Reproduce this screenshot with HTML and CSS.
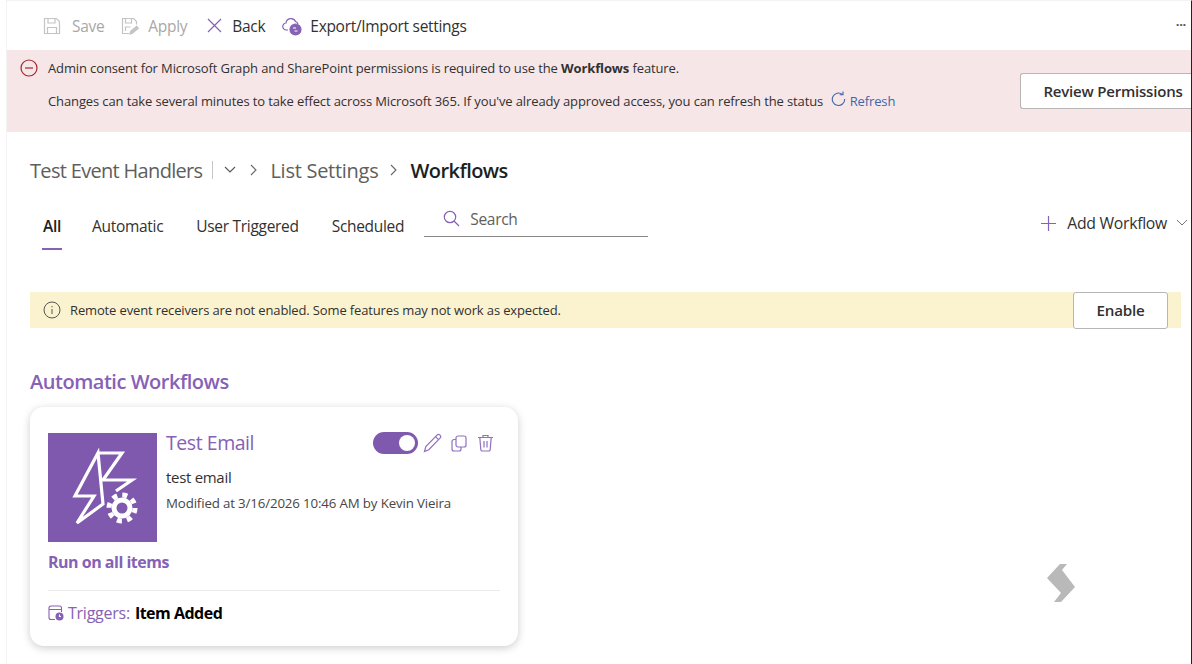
FILE: index.html
```html
<!DOCTYPE html>
<html lang="en">
  <head>
    <meta charset="UTF-8" />
    <title>Workflows</title>
    <link rel="stylesheet" href="styles.css">
  </head>
  <body>
    <div class="page">
      <!-- toolbar -->
      <div class="toolbar">
        <div class="cmd disabled cmd-save">
          <svg width="18" height="18" viewBox="0 0 18 18" fill="none" stroke="#c4c4c4" stroke-width="1.2"><path d="M1.500 1.500h12l3 3v12h-15z"/><path d="M5 1.500v4.500h7V1.500"/><path d="M4.500 16.500v-6h9v6"/></svg>
          <span>Save</span>
        </div>
        <div class="cmd disabled cmd-apply">
          <svg width="18" height="18" viewBox="0 0 18 18" fill="none" stroke="#c4c4c4" stroke-width="1.2"><path d="M8 16.500H1.500v-15h11l3 3v3"/><path d="M4.500 1.500v4.500h6V1.500"/><path d="M4.500 14v-4h5"/><path d="M9 17l.6-2.600 6-5 1.700 1.800-6 5z" fill="#c4c4c4"/></svg>
          <span>Apply</span>
        </div>
        <div class="cmd cmd-back">
          <svg width="15" height="15" viewBox="0 0 15 15" fill="none" stroke="#8661b5" stroke-width="1.200"><path d="M1 1l13 13M14 1L1 14"/></svg>
          <span>Back</span>
        </div>
        <div class="cmd cmd-export">
          <svg width="20" height="20" viewBox="0 0 20 20" fill="none" stroke="#8661b5" stroke-width="1.200"><path d="M6 14H4.500a3.500 3.500 0 0 1-.5-7A5 5 0 0 1 13.500 5.500a3.500 3.500 0 0 1 2.500 2.500"/><circle cx="13.500" cy="13.500" r="5.500" fill="#8661b5"/><path d="M11 12h3M12.500 15h3" stroke="#fff"/></svg>
          <span>Export/Import settings</span>
        </div>
        <div class="more">···</div>
      </div>

      <!-- consent banner -->
      <div class="banner">
        <svg class="banner-icon" width="18" height="18" viewBox="0 0 18 18" fill="none" stroke="#a4262c" stroke-width="1.200"><circle cx="9" cy="9" r="8"/><path d="M5 9h8"/></svg>
        <div class="banner-text">
          <p>Admin consent for Microsoft Graph and SharePoint permissions is required to use the <b>Workflows</b> feature.</p>
          <p class="second">
            Changes can take several minutes to take effect across Microsoft 365. If you've already approved access, you can refresh the status
            <svg class="refresh-icon" width="15" height="16" viewBox="0 0 15 16" fill="none" stroke="#3f66a8" stroke-width="1.100"><path d="M11.500 3.500A6.200 6.200 0 1 0 13.700 8"/><path d="M12 .5v3.300H8.700"/></svg>
            <span class="refresh">Refresh</span>
          </p>
        </div>
        <button type="button" class="btn review-btn">Review Permissions</button>
      </div>

      <div class="content">
        <!-- breadcrumb -->
        <div class="crumbs">
          <span class="crumb-root">Test Event Handlers</span>
          <span class="crumb-bar"></span>
          <svg width="12" height="8" viewBox="0 0 12 8" fill="none" stroke="#555" stroke-width="1.100"><path d="M1 1l5 5 5-5"/></svg>
          <svg class="crumb-sep first" width="8" height="12" viewBox="0 0 8 12" fill="none" stroke="#666" stroke-width="1.100"><path d="M1 1l5 5-5 5"/></svg>
          <span class="crumb-list">List Settings</span>
          <svg class="crumb-sep" width="8" height="12" viewBox="0 0 8 12" fill="none" stroke="#666" stroke-width="1.100"><path d="M1 1l5 5-5 5"/></svg>
          <span class="crumb-current">Workflows</span>
        </div>

        <!-- tabs -->
        <div class="tabbar">
          <div class="tab active">All</div>
          <div class="tab">Automatic</div>
          <div class="tab">User Triggered</div>
          <div class="tab">Scheduled</div>
          <div class="search">
            <svg width="17" height="17" viewBox="0 0 17 17" fill="none" stroke="#8661b5" stroke-width="1.200"><circle cx="7" cy="7" r="5.700"/><path d="M11 11l5 5"/></svg>
            <span>Search</span>
          </div>
          <div class="add">
            <svg width="15" height="15" viewBox="0 0 15 15" fill="none" stroke="#8661b5" stroke-width="1.200"><path d="M7.500 0v15M0 7.500h15"/></svg>
            <span>Add Workflow</span>
            <svg class="add-caret" width="12" height="8" viewBox="0 0 12 8" fill="none" stroke="#777" stroke-width="1"><path d="M1 1l5 5 5-5"/></svg>
          </div>
        </div>

        <!-- warning -->
        <div class="notice">
          <svg width="18" height="18" viewBox="0 0 18 18" fill="none" stroke="#555" stroke-width="1"><circle cx="9" cy="9" r="8"/><path d="M9 8v5M9 5v1.300"/></svg>
          <span class="notice-text">Remote event receivers are not enabled. Some features may not work as expected.</span>
          <button type="button" class="btn enable-btn">Enable</button>
        </div>

        <h2 class="section-title">Automatic Workflows</h2>

        <!-- workflow card -->
        <div class="card">
          <div class="card-top">
            <div class="thumb">
              <svg width="109" height="109" viewBox="0 0 109 109" fill="none" stroke="#fff" stroke-width="3.200">
                <path d="M50 20H74L55 47H84L68 58M55 71L29 90L46 63H27L50 20Z"/>
                <circle cx="74" cy="75" r="8" stroke-width="5"/>
                <circle cx="74" cy="75" r="13" stroke-width="5" stroke-dasharray="5 5.200"/>
              </svg>
            </div>
            <div class="card-info">
              <div class="card-head">
                <span class="card-title">Test Email</span>
                <div class="card-actions">
                  <div class="toggle"><span class="knob"></span></div>
                  <svg class="edit-icon" width="19" height="20" viewBox="0 0 19 20" fill="none" stroke="#9070c0" stroke-width="1.200"><path d="M1.500 18.500l1.300-5L14 2.200a2 2 0 0 1 3 3L5.800 16.700z"/><path d="M12.500 3.700l3 3"/></svg>
                  <svg width="16" height="17" viewBox="0 0 16 17" fill="none" stroke="#9070c0" stroke-width="1.200"><rect x="5" y="1" width="10" height="11" rx="2"/><path d="M5 4.500H3a2 2 0 0 0-2 2V14a2 2 0 0 0 2 2h5a2 2 0 0 0 2-2v-2"/></svg>
                  <svg class="trash-icon" width="17" height="18" viewBox="0 0 17 18" fill="none" stroke="#9070c0" stroke-width="1.200"><path d="M1 3.500h15M6 3.500V1.500h5v2M2.800 3.500l1 12a1.500 1.500 0 0 0 1.500 1.500h6.400a1.500 1.500 0 0 0 1.500-1.500l1-12M7 7v6.500M10 7v6.500"/></svg>
                </div>
              </div>
              <div class="card-desc">test email</div>
              <div class="card-meta">Modified at 3/16/2026 10:46 AM by Kevin Vieira</div>
            </div>
          </div>
          <div class="card-scope">Run on all items</div>
          <div class="card-triggers">
            <svg width="16" height="17" viewBox="0 0 16 17" fill="none" stroke="#8661b5" stroke-width="1.100"><path d="M7 14.500H3a2 2 0 0 1-2-2V3a2 2 0 0 1 2-2h8.500a2 2 0 0 1 2 2v4M1 4.500h12.500"/><circle cx="11.500" cy="11.500" r="4" fill="#8661b5" stroke="none"/><path d="M11.500 9.500v2h1.500" stroke="#fff"/></svg>
            <span class="trigger-label">Triggers:</span>
            <b>Item Added</b>
          </div>
        </div>
      </div>

      <svg class="watermark" width="30" height="40" viewBox="0 0 30 40"><path d="M13 0h7L15 6 28 23 14 38H7L14 29 0 14z" fill="#b9b9b9"/></svg>
    </div>
  </body>
</html>
```

FILE: styles.css
```css
* {
  margin: 0;
  padding: 0;
  box-sizing: border-box;
}
html,
body {
  height: 664px;
  overflow: hidden;
  background-color: #fff;
}
body {
  font-family: "Open Sans", "Liberation Sans", sans-serif;
  color: #323130;
}
.page {
  position: relative;
  height: 664px;
  margin-left: 6px;
  border-right: 1px solid #222;
  border-left: 1px solid #f3f3f3;
  border-top: 1px solid #f3f3f3;
}
svg {
  flex-shrink: 0;
}

/* toolbar */
.toolbar {
  height: 49px;
  display: flex;
  align-items: center;
  padding-left: 36px;
  font-size: 15.5px;
  letter-spacing: -0.3px;
}
.cmd {
  display: flex;
  align-items: center;
  gap: 11px;
  margin-right: 19px;
}
.disabled {
  color: #a8a8a8;
}
.cmd-save {
  margin-right: 17px;
}
.cmd-apply {
  gap: 9px;
  margin-right: 20px;
}
.cmd-back {
  gap: 10px;
  margin-right: 17px;
}
.cmd-export {
  gap: 8px;
}
.more {
  margin: -3px 5px 0 auto;
  font-size: 13px;
  font-weight: 700;
  color: #555;
}

/* banner */
.banner {
  height: 82px;
  background-color: #f6e6e7;
  display: flex;
  align-items: flex-start;
  padding: 9px 0 0 13px;
  font-size: 13px;
  letter-spacing: -0.12px;
}
.banner-icon {
  margin-right: 10px;
}
.banner-text {
  flex: 1;
  line-height: 18px;
}
.second {
  margin-top: 14px;
}
.refresh-icon {
  vertical-align: -1px;
  margin-left: 5px;
}
.refresh {
  color: #3f66a8;
}
.btn {
  background-color: #fff;
  border: 1px solid #b8b6b4;
  border-radius: 3px;
  font-family: inherit;
  font-weight: 600;
  color: #323130;
}
.review-btn {
  width: 171px;
  height: 36px;
  margin-top: 14px;
  border-right: none;
  border-radius: 3px 0 0 3px;
  font-size: 15px;
  letter-spacing: -0.2px;
  padding-left: 14px;
}

/* main area */
.content {
  padding: 0 10px 0 23px;
}
.crumbs {
  display: flex;
  align-items: center;
  height: 36px;
  margin-top: 20px;
  font-size: 20px;
  letter-spacing: -0.35px;
  color: #605e5c;
}
.crumb-root {
  letter-spacing: -0.68px;
}
.crumb-bar {
  width: 1px;
  height: 18px;
  background-color: #c8c6c4;
  margin: 0 11px 0 10px;
}
.crumb-sep {
  margin: 0 12px;
}
.crumb-sep.first {
  margin-left: 14px;
}
.crumb-list {
  letter-spacing: -0.27px;
}
.crumb-current {
  font-weight: 600;
  letter-spacing: -0.55px;
  color: #201f1e;
}
.tabbar {
  display: flex;
  align-items: flex-start;
  height: 91px;
  margin-top: 15px;
  font-size: 15.5px;
  letter-spacing: -0.3px;
}
.tab {
  position: relative;
  margin: 12px 33px 0 0;
  height: 32px;
}
.tab.active {
  font-weight: 600;
  margin-left: 13px;
  margin-right: 31px;
  color: #201f1e;
}
.tab.active::after {
  content: "";
  position: absolute;
  left: -1px;
  right: -1px;
  bottom: -3px;
  height: 2px;
  background-color: #8661b5;
}
.search {
  display: flex;
  align-items: center;
  gap: 10px;
  width: 224px;
  height: 33px;
  margin: 1px 0 0 -13px;
  padding: 0 0 3px 19px;
  border-bottom: 1px solid #8a8886;
  color: #605e5c;
}
.add {
  display: flex;
  align-items: center;
  gap: 11px;
  margin: 9px -7px 0 auto;
  font-size: 15.8px;
  color: #323130;
}
.add-caret {
  margin-left: -2px;
}
.notice {
  display: flex;
  align-items: center;
  gap: 9px;
  height: 36px;
  padding-left: 13px;
  margin-top: -2px;
  background-color: #fbf3d0;
  font-size: 13px;
  letter-spacing: -0.14px;
}
.notice-text {
  flex: 1;
}
.enable-btn {
  width: 95px;
  height: 37px;
  margin-right: 13px;
  font-size: 15.2px;
  letter-spacing: -0.2px;
}
.section-title {
  margin-top: 40px;
  font-size: 20px;
  font-weight: 600;
  letter-spacing: -0.47px;
  line-height: 28px;
  color: #8661b5;
}

/* card */
.card {
  width: 488px;
  height: 239px;
  margin-top: 11px;
  padding: 26px 18px 0;
  background-color: #fff;
  border-radius: 14px;
  box-shadow: 0 2px 8px rgba(0, 0, 0, 0.2);
}
.card-top {
  display: flex;
  gap: 9px;
}
.thumb {
  width: 109px;
  height: 109px;
  background-color: #7f59ad;
}
.card-info {
  flex: 1;
}
.card-head {
  display: flex;
  justify-content: space-between;
  align-items: center;
  height: 18px;
}
.card-title {
  font-size: 19.5px;
  letter-spacing: -0.45px;
  color: #8661b5;
}
.card-actions {
  display: flex;
  align-items: center;
  gap: 9px;
  margin: 2px 6px 0 0;
}
.toggle {
  display: flex;
  justify-content: flex-end;
  align-items: center;
  width: 45px;
  height: 22px;
  padding-right: 3px;
  border-radius: 11px;
  background-color: #7f59ad;
  margin-right: -4px;
}
.knob {
  width: 16px;
  height: 16px;
  border-radius: 50%;
  background-color: #fff;
}
.trash-icon {
  margin-left: 1px;
}
.card-desc {
  margin-top: 16px;
  font-size: 15px;
  letter-spacing: -0.3px;
}
.card-meta {
  margin-top: 7px;
  font-size: 13.3px;
  letter-spacing: -0.15px;
  color: #484644;
}
.card-scope {
  margin-top: 9px;
  font-size: 16px;
  font-weight: 700;
  letter-spacing: -0.5px;
  color: #8661b5;
}
.card-triggers {
  display: flex;
  align-items: center;
  gap: 4px;
  margin-top: 17px;
  padding-top: 11px;
  border-top: 1px solid #ececec;
  font-size: 16px;
  letter-spacing: -0.25px;
  color: #000;
}
.card-triggers b {
  font-weight: 700;
  margin-left: 1px;
  letter-spacing: -0.5px;
}
.trigger-label {
  color: #8661b5;
}
.watermark {
  position: absolute;
  left: 1040px;
  top: 563px;
}
```
